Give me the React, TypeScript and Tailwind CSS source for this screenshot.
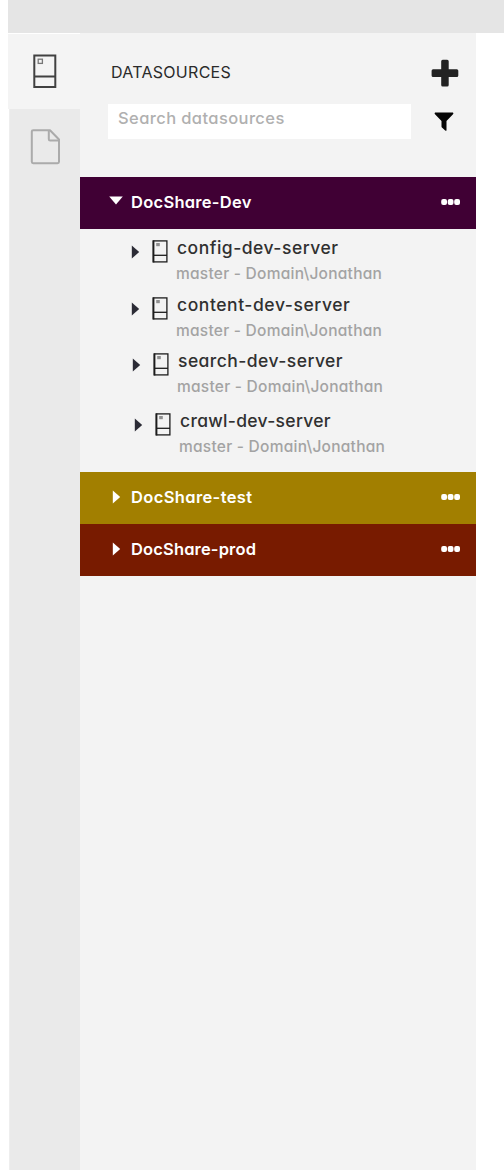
import React from "react";

const FONT =
  "font-['Inter','Liberation_Sans',sans-serif] [font-feature-settings:'cv11','calt'_0]";

function ServerIcon({ large = false }: { large?: boolean }) {
  if (large) {
    return (
      <svg width="24" height="35" viewBox="0 0 24 35" fill="none" className="block">
        <rect x="1.3" y="1.5" width="21" height="31.5" stroke="#414141" strokeWidth="2" />
        <path d="M1.5 22.5H22" stroke="#414141" strokeWidth="2" />
        <rect x="5.2" y="5.2" width="4.2" height="4.2" stroke="#777" strokeWidth="1.3" />
      </svg>
    );
  }
  return (
    <svg width="17" height="23" viewBox="0 0 17 23" fill="none" className="block">
      <rect x="1.3" y="0.9" width="13.6" height="21" stroke="#1c1c1c" strokeWidth="1.3" />
      <path d="M1.5 0.5V22.4" stroke="#1c1c1c" strokeWidth="1.8" />
      <path d="M1.5 15.3H15" stroke="#1c1c1c" strokeWidth="1.3" />
      <rect x="4.2" y="3" width="3.6" height="3.2" fill="#909090" />
    </svg>
  );
}

function FileIcon() {
  return (
    <svg width="31" height="36" viewBox="0 0 31 36" fill="none" stroke="#ababab" strokeWidth="2" strokeLinejoin="round" className="block">
      <path d="M3.2 1.2H20L29 10.5V32.8Q29 34.2 27.6 34.2H3.2Q1.8 34.2 1.8 32.8V2.6Q1.8 1.2 3.2 1.2Z" />
      <path d="M18.8 1.5V10.2Q18.8 11.6 20.2 11.6H28.8" />
    </svg>
  );
}

function CaretRight({ color }: { color: string }) {
  return (
    <svg width="9" height="14" viewBox="0 0 9 14" className="block">
      <path d="M0.8 0.4L8.2 7L0.8 13.6Z" fill={color} />
    </svg>
  );
}

function CaretDown() {
  return (
    <svg width="14" height="9" viewBox="0 0 14 9" className="block">
      <path d="M0.2 0.6H13.8L7 8.4Z" fill="#fff" />
    </svg>
  );
}

function Dots() {
  return (
    <svg width="20" height="6" viewBox="0 0 20 6" fill="#fff" className="block">
      <rect x="0.2" y="0" width="5.8" height="6" rx="2" />
      <rect x="6.7" y="0" width="5.8" height="6" rx="2" />
      <rect x="13.2" y="0" width="5.8" height="6" rx="2" />
    </svg>
  );
}

function Group({ name, open, tone, tracking }: { name: string; open?: boolean; tone: string; tracking: string }) {
  return (
    <button className={`flex h-[52px] w-full shrink-0 items-center pr-[15px] pb-[2px] text-left text-white ${tone}`}>
      <span className={open ? "ml-[29px] w-[22px] pb-[3px]" : "ml-[32px] w-[19px]"}>
        {open ? <CaretDown /> : <CaretRight color="#fff" />}
      </span>
      <span className={`grow whitespace-nowrap text-[16.5px] leading-6 font-semibold ${tracking}`}>{name}</span>
      <Dots />
    </button>
  );
}

const servers = [
  { name: "config-dev-server", row: "h-[57px] pl-[51px]", tracking: "tracking-[0.5px]" },
  { name: "content-dev-server", row: "h-[56px] pl-[51px]", tracking: "tracking-[0.56px]" },
  { name: "search-dev-server", row: "h-[60px] pl-[52px]", tracking: "tracking-[0.45px]" },
  { name: "crawl-dev-server", row: "h-[55px] pl-[54px]", tracking: "tracking-[0.3px]" },
];

export default function App() {
  return (
    <div className={`flex h-[1170px] w-[504px] flex-col overflow-hidden bg-white pl-2 ${FONT}`}>
      <header className="h-[33px] shrink-0 bg-[#e5e5e5]" />
      <div className="flex grow">
        <nav className="flex w-[72px] shrink-0 flex-col border-t border-white">
          <button className="flex h-[75px] w-full justify-center bg-[#f4f4f4] pt-[20px] pl-[2px]">
            <ServerIcon large />
          </button>
          <div className="ml-[1px] flex grow items-start justify-center border-l border-[#eeeeee] bg-[#eaeaea] pt-[20px] pl-[1px]">
            <FileIcon />
          </div>
        </nav>
        <main className="flex w-[396px] shrink-0 flex-col bg-[#f3f3f3]">
          <div className="flex h-[144px] shrink-0 pl-[28px]">
            <div className="w-[303px]">
              <h1 className="mt-[27px] ml-[3px] whitespace-nowrap text-[16px] leading-6 tracking-[0.28px] text-[#2a2a2a]">DATASOURCES</h1>
              <div className="mt-[20px] h-[35px] w-[303px] bg-white pt-[2px] pl-[10px] text-[16.5px] leading-6 font-medium tracking-[0.4px] whitespace-nowrap text-[#b0b0b0]">
                Search datasources
              </div>
            </div>
            <div className="ml-[19px] w-[30px] pt-[26px]">
              <svg width="30" height="29" viewBox="0 0 30 29" className="block">
                <path d="M12.7 0.7H17.2Q18.7 0.7 18.7 2.2V10.3H26.8Q28.3 10.3 28.3 11.8V16.4Q28.3 17.9 26.8 17.9H18.7V26Q18.7 27.5 17.2 27.5H12.7Q11.2 27.5 11.2 26V17.9H3.1Q1.6 17.9 1.6 16.4V11.8Q1.6 10.3 3.1 10.3H11.2V2.2Q11.2 0.7 12.7 0.7Z" fill="#222" />
              </svg>
              <svg width="20" height="20" viewBox="0 0 20 20" className="mt-[24px] ml-[4px] block">
                <path d="M1.1 0.6H18.9Q20 1.2 19 2.3L12.5 9V18.2Q12.3 19.2 11.2 18.5L8.2 15.8Q7.5 15.1 7.5 14.4V9L1 2.3Q0 1.2 1.1 0.6Z" fill="#050505" />
              </svg>
            </div>
          </div>
          <Group name="DocShare-Dev" open tone="bg-[#400034]" tracking="tracking-[0.27px]" />
          <div className="h-[243px] shrink-0 pt-[8px]">
            {servers.map((s) => (
              <div key={s.name} className={`flex ${s.row}`}>
                <span className="w-[21px] pt-[8px]"><CaretRight color="#2b2b35" /></span>
                <span className="w-[24px] pt-[3px]"><ServerIcon /></span>
                <div className="whitespace-nowrap">
                  <div className={`h-[24px] pl-[1px] text-[17.5px] leading-[22px] font-medium text-[#303030] ${s.tracking}`}>{s.name}</div>
                  <div className="text-[15.5px] leading-[26px] font-medium tracking-[0.25px] text-[#a3a3a3]">{"master - Domain\\Jonathan"}</div>
                </div>
              </div>
            ))}
          </div>
          <Group name="DocShare-test" tone="bg-[#a27f00]" tracking="tracking-[0.37px]" />
          <Group name="DocShare-prod" tone="bg-[#781b00]" tracking="tracking-[0.15px]" />
        </main>
      </div>
    </div>
  );
}
